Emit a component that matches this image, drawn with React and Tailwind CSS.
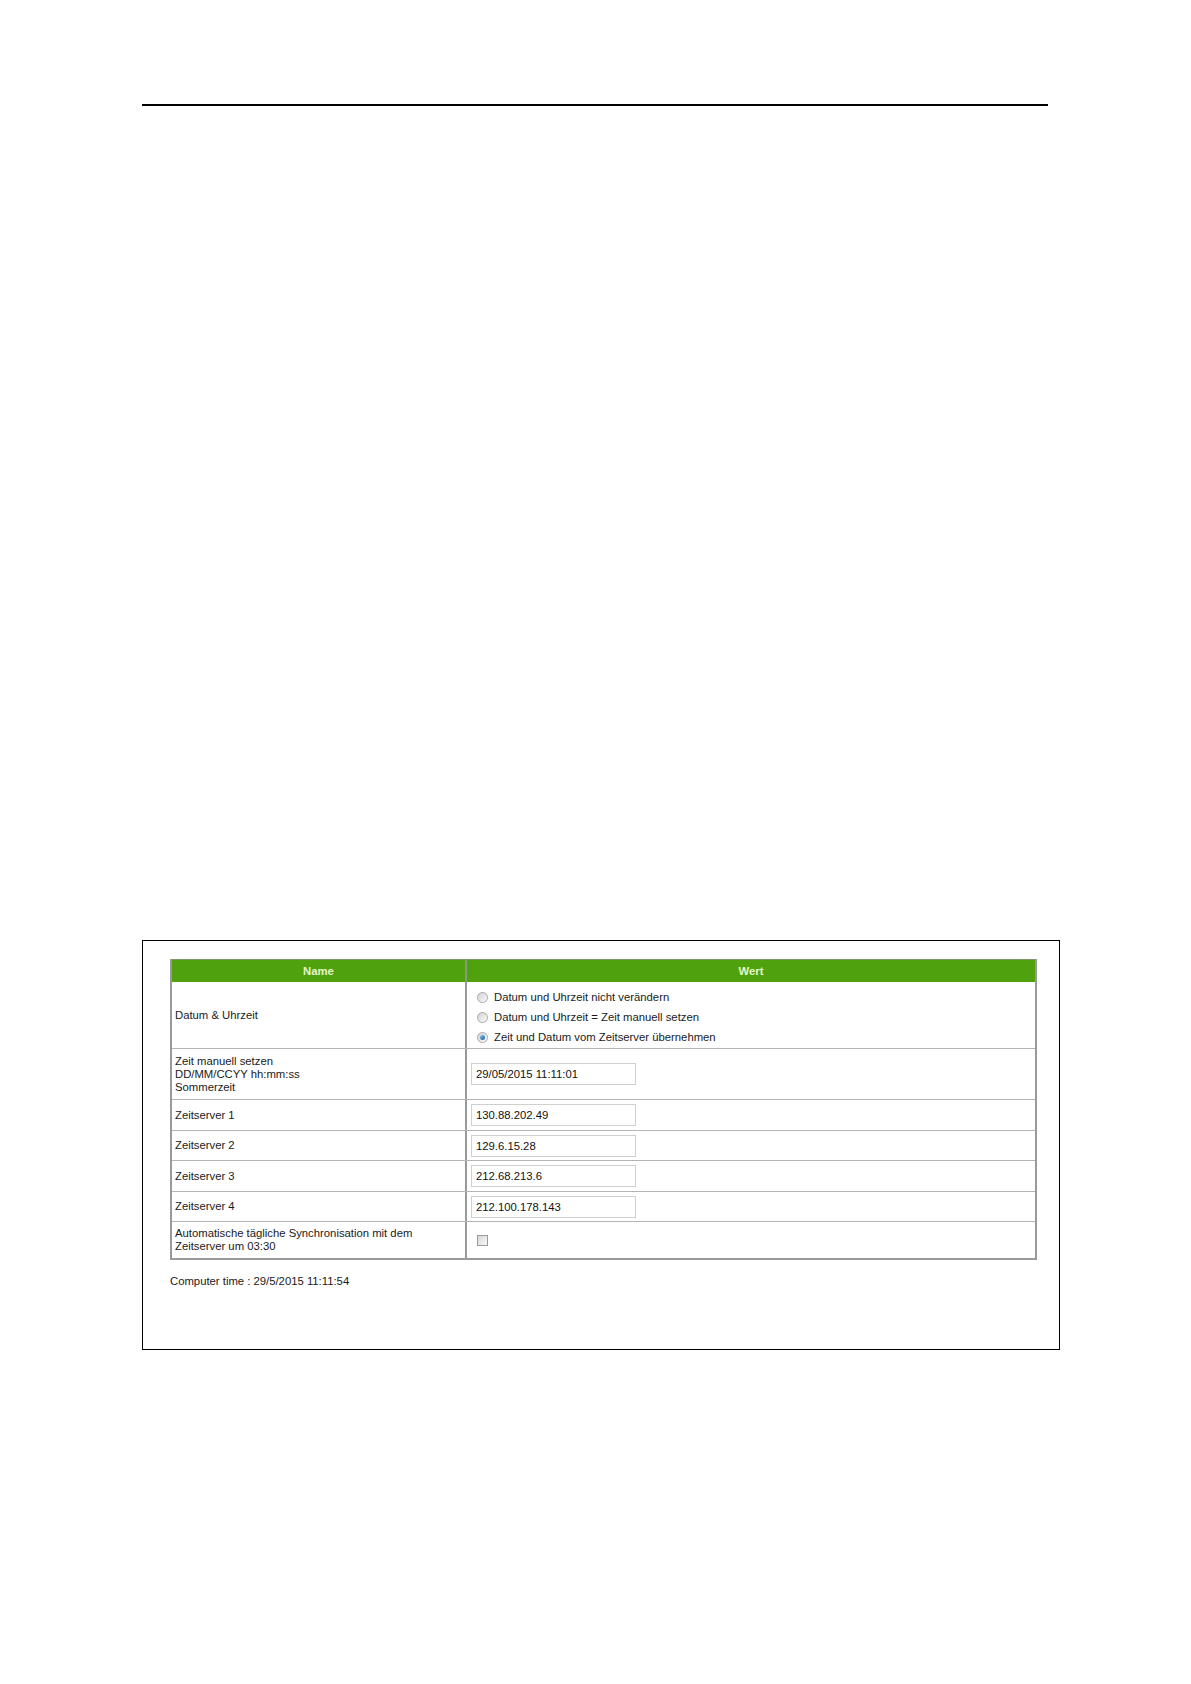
import React from 'react';

const Radio = ({ checked }) => (
  <span className="relative inline-block w-[11px] h-[11px] rounded-full border border-[#a8a8a8] bg-gradient-to-br from-[#d4d4d4] to-[#fafafa] shrink-0">
    {checked && (
      <span className="absolute left-[2px] top-[2px] w-[5px] h-[5px] rounded-full bg-gradient-to-br from-[#7fc0ee] to-[#1f5f9a]" />
    )}
  </span>
);

const TextField = ({ value }) => (
  <input
    readOnly
    defaultValue={value}
    className="w-[165px] h-[22px] border border-[#d0d0d0] px-[4px] text-[11.3px] text-[#111] bg-white outline-none"
  />
);

const Row = ({ height, label, children, last }) => (
  <div className={`flex ${last ? '' : 'border-b'} border-[#b4b4b4]`} style={{ height }}>
    <div className="w-[295px] shrink-0 border-r-2 border-[#999] flex items-center pl-[3px] leading-[13px]">
      {label}
    </div>
    <div className="flex-1 flex items-center pl-[4px]">{children}</div>
  </div>
);

const servers = [
  ['Zeitserver 1', '130.88.202.49', 31],
  ['Zeitserver 2', '129.6.15.28', 30],
  ['Zeitserver 3', '212.68.213.6', 31],
  ['Zeitserver 4', '212.100.178.143', 30],
];

export default function App() {
  return (
    <div
      className="w-[1191px] h-[1684px] bg-white pt-[104px] text-[11.3px] text-[#1a1a1a]"
      style={{ fontFamily: '"Liberation Sans", Arial, sans-serif' }}
    >
      <div className="ml-[142px] w-[906px] h-[2px] bg-black" />

      <div className="ml-[142px] mt-[834px] w-[918px] h-[410px] border border-black pt-[18px] pl-[27px]">
        <div className="w-[867px] border-x-2 border-b-2 border-[#999]">
          <div className="flex h-[23px] bg-[#4fa20e] border-t border-[#7a9a6a] text-[#e6f7c6] font-bold">
            <div className="w-[295px] shrink-0 border-r-2 border-[#8a9a80] flex items-center justify-center">
              Name
            </div>
            <div className="flex-1 flex items-center justify-center">Wert</div>
          </div>

          <Row height={67} label="Datum & Uhrzeit">
            <div className="flex flex-col gap-[7px] pl-[6px] pt-[4px] leading-[13px]">
              <div className="flex items-center gap-[6px]">
                <Radio />
                <span>Datum und Uhrzeit nicht verändern</span>
              </div>
              <div className="flex items-center gap-[6px]">
                <Radio />
                <span>Datum und Uhrzeit = Zeit manuell setzen</span>
              </div>
              <div className="flex items-center gap-[6px]">
                <Radio checked />
                <span>Zeit und Datum vom Zeitserver übernehmen</span>
              </div>
            </div>
          </Row>

          <Row
            height={51}
            label={
              <div>
                <div>Zeit manuell setzen</div>
                <div>DD/MM/CCYY hh:mm:ss</div>
                <div>Sommerzeit</div>
              </div>
            }
          >
            <TextField value="29/05/2015 11:11:01" />
          </Row>

          {servers.map(([name, ip, h]) => (
            <Row key={name} height={h} label={name}>
              <TextField value={ip} />
            </Row>
          ))}

          <Row
            height={36}
            last
            label={
              <div>
                <div>Automatische tägliche Synchronisation mit dem</div>
                <div>Zeitserver um 03:30</div>
              </div>
            }
          >
            <span className="ml-[6px] w-[11px] h-[11px] border border-[#9a9a9a] bg-gradient-to-br from-[#d8d8d8] to-[#f8f8f8]" />
          </Row>
        </div>

        <div className="mt-[13px]">Computer time : 29/5/2015 11:11:54</div>
      </div>
    </div>
  );
}
